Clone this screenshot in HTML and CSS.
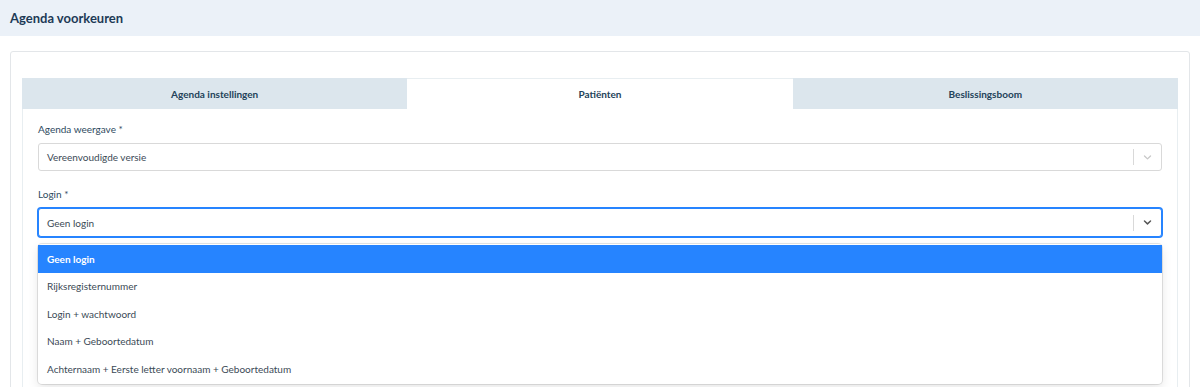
FILE: index.html
```html
<!DOCTYPE html>
<html lang="nl">
<head>
    <meta charset="UTF-8">
    <meta name="viewport" content="width=device-width, initial-scale=1.0">
    <title>Agenda voorkeuren</title>
    <link rel="stylesheet" href="styles.css">
</head>
<body>
    <header class="page-header">
        <h1>Agenda voorkeuren</h1>
    </header>

    <div class="card">
        <div class="tabs">
            <div class="tab">Agenda instellingen</div>
            <div class="tab active">Patiënten</div>
            <div class="tab">Beslissingsboom</div>
        </div>

        <div class="tab-panel">
            <label class="field-label">Agenda weergave *</label>
            <div class="select">
                <span class="select-value">Vereenvoudigde versie</span>
                <span class="select-sep"></span>
                <span class="select-arrow">
                    <svg width="11" height="11" viewBox="0 0 20 20"><path d="M4.5 7.2 10 12.5l5.5-5.3" fill="none" stroke="currentColor" stroke-width="2.4" stroke-linecap="round" stroke-linejoin="round"/></svg>
                </span>
            </div>

            <label class="field-label">Login *</label>
            <div class="select focused">
                <span class="select-value">Geen login</span>
                <span class="select-sep"></span>
                <span class="select-arrow">
                    <svg width="11" height="11" viewBox="0 0 20 20"><path d="M4.5 7.2 10 12.5l5.5-5.3" fill="none" stroke="currentColor" stroke-width="2.6" stroke-linecap="round" stroke-linejoin="round"/></svg>
                </span>
            </div>

            <!-- menu van de login select -->
            <ul class="menu">
                <li class="option selected">Geen login</li>
                <li class="option">Rijksregisternummer</li>
                <li class="option">Login + wachtwoord</li>
                <li class="option">Naam + Geboortedatum</li>
                <li class="option">Achternaam + Eerste letter voornaam + Geboortedatum</li>
            </ul>
        </div>
    </div>
</body>
</html>
```

FILE: styles.css
```css
* {
    margin: 0;
    padding: 0;
    box-sizing: border-box;
    font-family: Lato, "Open Sans", sans-serif;
}

html, body {
    height: 387px;
    overflow: hidden;
}

body {
    background-color: #fff;
    color: #33475b;
}

.page-header {
    height: 36px;
    background-color: #ebf1f8;
    padding: 0 10px;
    display: flex;
    align-items: center;
}

.page-header h1 {
    font-size: 13px;
    font-weight: bold;
    color: #1d3a56;
}

.card {
    margin: 15px 10px 0 10px;
    border: 1px solid #e3e6e9;
    border-radius: 3px;
    padding: 26px 11px 0 11px;
    height: 345px;
}

.tabs {
    display: flex;
}

.tab {
    flex: 1;
    height: 31px;
    display: flex;
    align-items: center;
    justify-content: center;
    font-size: 10px;
    font-weight: bold;
    color: #234259;
    background-color: #dce6ed;
}

.tab.active {
    background-color: #fff;
    border-top: 1px solid #e8eef1;
}

.tab-panel {
    border-left: 1px solid #e8eef1;
    border-right: 1px solid #e8eef1;
    padding: 14px 15px 0 15px;
    height: 285px;
}

.field-label {
    display: block;
    font-size: 10px;
    color: #2e4a60;
    margin-bottom: 8px;
}

.select {
    display: flex;
    align-items: center;
    height: 28px;
    border: 1px solid #d9d9d9;
    border-radius: 3px;
    margin-bottom: 17px;
    background-color: #fff;
}

.select-value {
    flex: 1;
    padding-left: 8px;
    font-size: 10px;
    color: #3b4a56;
}

.select-sep {
    width: 1px;
    height: 16px;
    background-color: #d9d9d9;
}

.select-arrow {
    width: 27px;
    display: flex;
    align-items: center;
    justify-content: center;
    color: #c8c8c8;
}

.select.focused {
    height: 29px;
    border-color: #2684ff;
    box-shadow: 0 0 0 1px #2684ff;
    margin-bottom: 7px;
}

.select.focused .select-arrow {
    color: #555;
}

.menu {
    list-style: none;
    border-radius: 4px;
    box-shadow: 0 0 0 1px rgba(0, 0, 0, 0.1), 0 4px 11px rgba(0, 0, 0, 0.1);
    padding: 1px 0;
    background-color: #fff;
}

.option {
    height: 27.5px;
    display: flex;
    align-items: center;
    padding-left: 9px;
    font-size: 10px;
    color: #3b4a56;
}

.option.selected {
    background-color: #2684ff;
    color: #fff;
    font-weight: bold;
}
```
